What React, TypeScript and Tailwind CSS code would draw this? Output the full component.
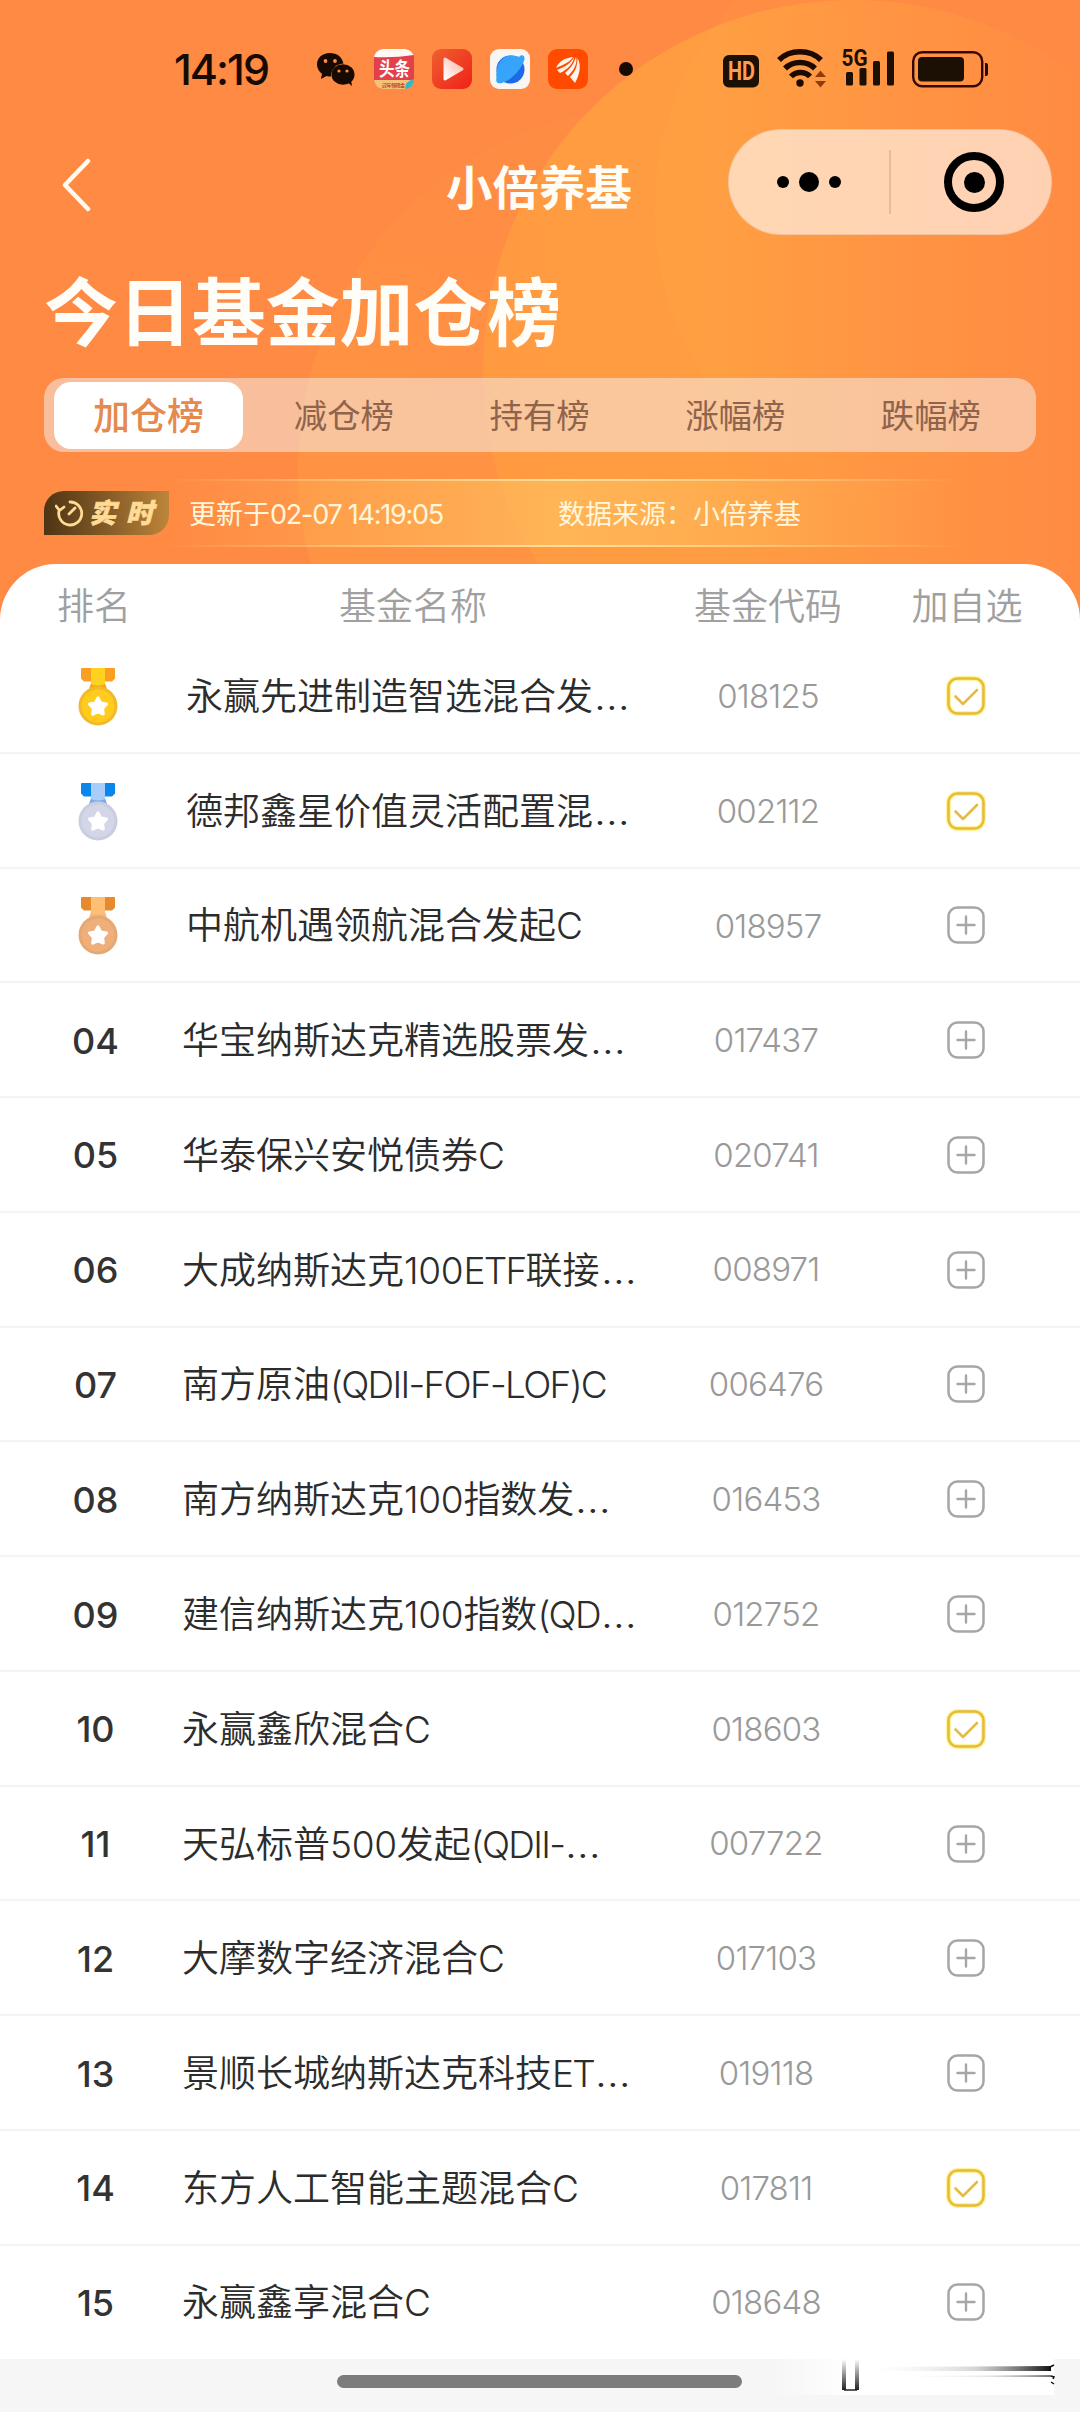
import React from 'react';

type Row = { name: string; code: string; added?: boolean };

const rows: Row[] = [
  { name: '永赢先进制造智选混合发…', code: '018125', added: true },
  { name: '德邦鑫星价值灵活配置混…', code: '002112', added: true },
  { name: '中航机遇领航混合发起C', code: '018957' },
  { name: '华宝纳斯达克精选股票发…', code: '017437' },
  { name: '华泰保兴安悦债券C', code: '020741' },
  { name: '大成纳斯达克100ETF联接…', code: '008971' },
  { name: '南方原油(QDII-FOF-LOF)C', code: '006476' },
  { name: '南方纳斯达克100指数发…', code: '016453' },
  { name: '建信纳斯达克100指数(QD…', code: '012752' },
  { name: '永赢鑫欣混合C', code: '018603', added: true },
  { name: '天弘标普500发起(QDII-…', code: '007722' },
  { name: '大摩数字经济混合C', code: '017103' },
  { name: '景顺长城纳斯达克科技ET…', code: '019118' },
  { name: '东方人工智能主题混合C', code: '017811', added: true },
  { name: '永赢鑫享混合C', code: '018648' },
];

const medals = [
  { side: '#fb9f22', mid: '#ffd21f', neck: '#f0a91c', rim: '#f3b92c', face: '#ffcb1c' },
  { side: '#0b86ea', mid: '#a9cdfb', neck: '#7fa9e6', rim: '#c9cedf', face: '#d3d6e6' },
  { side: '#e68a2c', mid: '#fcbf74', neck: '#f4b97c', rim: '#e6a873', face: '#eeaf7b' },
];

function Medal({ i }: { i: number }) {
  const m = medals[i];
  return (
    <svg width="40" height="58" viewBox="0 0 40 58">
      <path d="M3.500 0H13V13.500H6L3 10.500V1Z M36.500 0H27V13.500H34L37 10.500V1Z" fill={m.side} />
      <path d="M13 15H27L30 24H10Z" fill={m.neck} />
      <path d="M13 0H27V16Q20 19 13 16Z" fill={m.mid} />
      <circle cx="20" cy="38" r="19.5" fill={m.rim} />
      <circle cx="20" cy="38" r="16.500" fill={m.face} />
      <path
        d="M20 30L22.600 35L28.500 36L24.500 40.500L25.200 46L20 43.500L14.800 46L15.500 40.500L11.500 36L17.400 35Z"
        fill="#fff"
        stroke="#fff"
        strokeWidth="3.200"
        strokeLinejoin="round"
      />
    </svg>
  );
}

function Mark({ added }: { added?: boolean }) {
  return (
    <svg width="40" height="40" viewBox="0 0 40 40" fill="none" strokeLinecap="round" strokeLinejoin="round">
      {added && <rect x="2.500" y="2.500" width="35" height="35" rx="9" stroke="#fff3a0" strokeWidth="5" />}
      <rect x="2.500" y="2.500" width="35" height="35" rx="9" stroke={added ? '#e6bb35' : '#a6a6a6'} strokeWidth="2.500" />
      {added ? (
        <path d="M9.500 20.500L17 28L31 14" stroke="#e6bb45" strokeWidth="2.600" />
      ) : (
        <path d="M11.500 20H28.500M20 11.500V28.500" stroke="#a6a6a6" strokeWidth="2.400" />
      )}
    </svg>
  );
}

function FundName({ name }: { name: string }) {
  return (
    <>
      {(name.match(/[0-9]+|[A-Z()-]+|…|[^0-9A-Z()…-]+/g) ?? []).map((part, i) => {
        if (part === '…') return <span key={i} className="inline-block origin-left translate-x-[1px] scale-x-[1.14]">…</span>;
        if (/^[A-Z()-]/.test(part)) return <span key={i} className="tracking-[-1.700px]">{part}</span>;
        if (/^[0-9]/.test(part)) return <span key={i} className="tracking-[-.3px]">{part}</span>;
        return <span key={i}>{part}</span>;
      })}
    </>
  );
}

function WeChat() {
  return (
    <svg width="40" height="36" viewBox="0 0 40 36">
      <path d="M14 1C6 1 1 6 1 12.500C1 16.500 3 19.500 6 21.700L5 27L10.500 24C12 24.400 13 24.500 15 24.500C15 17 20 12 27.500 11.500C26 5 21 1 14 1Z" fill="#170a03" />
      <ellipse cx="27" cy="22.500" rx="11.500" ry="10.200" fill="#170a03" />
      <path d="M31 30L36 34L35 28Z" fill="#170a03" />
      <g fill="#ff8a43">
        <circle cx="9.500" cy="9" r="1.900" />
        <circle cx="19" cy="9" r="1.900" />
        <circle cx="23" cy="19" r="1.600" />
        <circle cx="31" cy="19" r="1.600" />
      </g>
    </svg>
  );
}

function StatusBar() {
  return (
    <div className="flex h-[129px] items-start pt-[49px]">
      <div className="ml-[174px] w-[142px] text-[43px] font-medium leading-[41px] tracking-[-2px] text-[#170a03] whitespace-nowrap">14:19</div>
      <div className="mt-[3px] w-[58px]">
        <WeChat />
      </div>
      <div className="flex gap-[18px]">
        <svg className="overflow-visible" width="40" height="40" viewBox="0 0 40 40">
          <clipPath id="tile"><rect width="40" height="40" rx="9" /></clipPath>
          <g clipPath="url(#tile)">
            <rect width="40" height="40" fill="#e2404a" />
            <path d="M0 0H40V6Q20 9 0 8Z" fill="#fffaf6" />
            <path d="M0 31H40V40H0Z" fill="#f6c27a" />
            <path d="M31 40Q31 32 40 30V40Z" fill="#35b6c8" />
          </g>
          <text x="5" y="27" fontSize="19" fontWeight="700" fill="#fff" textLength="31" lengthAdjust="spacingAndGlyphs">头条</text>
          <text x="8" y="37.500" fontSize="5" fontWeight="700" fill="#b5482a" textLength="23">过年领现金</text>
        </svg>
        <svg width="40" height="40" viewBox="0 0 40 40">
          <defs>
            <linearGradient id="play" x1="0" y1="0" x2="1" y2="1">
              <stop offset="0" stopColor="#f0602f" />
              <stop offset="1" stopColor="#ee2118" />
            </linearGradient>
            <linearGradient id="tri" x1="0" y1="1" x2="1" y2="0">
              <stop offset="0" stopColor="#fff" />
              <stop offset="1" stopColor="#ffb3a6" />
            </linearGradient>
          </defs>
          <rect width="40" height="40" rx="9" fill="url(#play)" />
          <path d="M13 10L30 20L13 30Z" fill="url(#tri)" stroke="url(#tri)" strokeWidth="3" strokeLinejoin="round" />
        </svg>
        <svg width="40" height="40" viewBox="0 0 40 40">
          <rect width="40" height="40" rx="9" fill="#f8f6f3" />
          <circle cx="20.500" cy="20.500" r="14" fill="#1d6ae8" />
          <path d="M29 8C31 5 35 6 34.500 10C33 18 22 31 13 33.500C9 35.500 5 34 6.500 29C5 20 10 7 21 6.500C25 6.500 27 7 29 8Z" fill="#37a4fb" />
        </svg>
        <svg width="40" height="40" viewBox="0 0 40 40">
          <rect width="40" height="40" rx="9" fill="#ff4a00" />
          <g fill="#fff4ea">
            <path d="M8 19C11 12 17 9 25 8C22 13 15 16 8 19Z" />
            <path d="M9 21C17 18 23 14 26 8C26 14 19 21 12 24Z" />
            <path d="M17 24C23 19 26 14 28 8C30 15 25 22 20 27Z" />
            <path d="M22 28C28 22 29.500 16 29.500 9C34 17 31 27 27 34Z" />
          </g>
        </svg>
      </div>
      <div className="ml-[31px] mt-[13px] h-[14px] w-[14px] rounded-full bg-[#170a03]" />
      <svg className="ml-[90px] mt-[6px]" width="36" height="33" viewBox="0 0 36 33">
        <rect width="36" height="32.500" rx="6" fill="#1c1004" />
        <text x="5" y="25" fontSize="25" fontWeight="700" fontFamily="Roboto" fill="#ff9d50" textLength="27" lengthAdjust="spacingAndGlyphs">HD</text>
      </svg>
      <svg className="ml-[18px]" width="50" height="40" viewBox="0 0 50 40" fill="none">
        <g stroke="#1c0a02" strokeWidth="5.500">
          <path d="M2 11C13 0 33 0 44 11" />
          <path d="M8 19.500C16 11.500 30 11.500 38 19.500" />
          <path d="M14 27.500C19 22 28 22 33 27.500" />
        </g>
        <circle cx="23" cy="34" r="3.700" fill="#1c0a02" />
        <path d="M38 28L43.500 21.500L49 28ZM38 32L43.500 38.500L49 32Z" fill="#8d3d0c" />
      </svg>
      <svg className="ml-[15px] overflow-visible" width="54" height="40" viewBox="0 0 54 40">
        <g fill="#1c1004">
          <rect x="4" y="23" width="7" height="13.500" rx="1.500" />
          <rect x="17.500" y="19" width="7" height="17.500" rx="1.500" />
          <rect x="31" y="12" width="7" height="24.500" rx="1.500" />
          <rect x="45" y="2.500" width="7" height="34" rx="1.500" />
        </g>
        <text x="-0.500" y="16.500" fontSize="23" fontWeight="700" fontFamily="Roboto" textLength="26" lengthAdjust="spacingAndGlyphs" fill="#1c1004">5G</text>
      </svg>
      <svg className="ml-[16px] mt-[2px]" width="78" height="38" viewBox="0 0 78 38">
        <rect x="1.200" y="1.200" width="69" height="34" rx="9" fill="none" stroke="#330a02" strokeWidth="2.400" />
        <rect x="6" y="6" width="46" height="24.500" rx="4" fill="#1c1004" />
        <path d="M73 12H74Q76 12 76 14V23Q76 25 74 25H73Z" fill="#1c1004" />
      </svg>
    </div>
  );
}

function Backdrop() {
  return (
    <svg className="absolute inset-0 -z-10" width="1080" height="640" viewBox="0 0 1080 640">
      <defs>
        <linearGradient id="disc" gradientUnits="userSpaceOnUse" x1="480" y1="0" x2="1080" y2="0">
          <stop offset="0" stopColor="#ff9a41" />
          <stop offset="0.400" stopColor="#ff9d42" />
          <stop offset="1" stopColor="#ff8b43" />
        </linearGradient>
        <linearGradient id="outer" gradientUnits="userSpaceOnUse" x1="420" y1="180" x2="380" y2="420">
          <stop offset="0" stopColor="#ff8c43" />
          <stop offset="1" stopColor="#ff9343" />
        </linearGradient>
        <linearGradient id="glow" gradientUnits="userSpaceOnUse" x1="650" y1="0" x2="1000" y2="0">
          <stop offset="0" stopColor="#ffab45" stopOpacity=".2" />
          <stop offset="1" stopColor="#ff9444" stopOpacity="0" />
        </linearGradient>
      </defs>
      <rect width="1080" height="640" fill="#ff8a43" />
      <circle cx="660" cy="468" r="362" fill="url(#outer)" />
      <circle cx="853" cy="370" r="370" fill="url(#disc)" />
      <circle cx="965" cy="210" r="310" fill="url(#glow)" />
    </svg>
  );
}

export default function App() {
  return (
    <div className="relative isolate flex h-[2412px] w-[1080px] flex-col overflow-hidden bg-[#f6f6f6] [font-family:Inter,'Noto_Sans_CJK_SC',sans-serif]">
      <Backdrop />
      <StatusBar />

      <div className="flex h-[106px] items-center">
        <svg className="ml-[60px] mt-[6px]" width="32" height="54" viewBox="0 0 32 54" fill="none">
          <path d="M28 3L5 27L28 51" stroke="#fffaf0" strokeWidth="4.500" strokeLinecap="round" strokeLinejoin="round" />
        </svg>
        <h1 className="ml-[354px] w-[282px] pt-[11px] text-[46.500px] font-bold leading-[50px] text-[#fffdf6] whitespace-nowrap">小倍养基</h1>
        <div className="flex h-[106px] w-[324px] items-center rounded-full border border-[#e8b48c]/50 bg-white/60">
          <div className="flex w-[160px] items-center justify-center gap-[10px]">
            <span className="h-[12px] w-[12px] rounded-full bg-black" />
            <span className="h-[20px] w-[20px] rounded-full bg-black" />
            <span className="h-[12px] w-[12px] rounded-full bg-black" />
          </div>
          <div className="h-[64px] w-[2px] bg-[#e3bd9c]" />
          <div className="flex flex-1 justify-center">
            <div className="mr-[-6px] flex h-[60px] w-[60px] items-center justify-center rounded-full border-[8px] border-black">
              <span className="h-[21px] w-[21px] rounded-full bg-black" />
            </div>
          </div>
        </div>
      </div>

      <h2 className="ml-[44px] mt-[34px] h-[109px] text-[73.900px] font-bold leading-[88px] text-[#fffdf8] whitespace-nowrap">今日基金加仓榜</h2>

      <div className="mx-[44px] flex h-[74px] items-center rounded-[20px] bg-[#f4ebe6]/55 pl-[10px] text-[#8f634c]">
        <div className="flex h-[67px] w-[189px] items-center justify-center rounded-[17px] bg-white pt-[3px] text-[37px] font-medium text-[#e58a4e]">加仓榜</div>
        <div className="flex flex-1 pl-[3px] pt-[2px]">
          {['减仓榜', '持有榜', '涨幅榜', '跌幅榜'].map((t) => (
            <div key={t} className="w-[195.700px] text-center text-[33.400px] leading-[48px]">{t}</div>
          ))}
        </div>
      </div>

      <div className="mt-[27px] flex h-[68px] items-center">
        <div className="z-10 ml-[44px] flex h-[44px] w-[125px] items-center rounded-br-[20px] rounded-tl-[20px] bg-linear-to-r from-[#4f3414] to-[#bd853a] pl-[11px] text-[#ffdb96]">
          <svg width="30" height="30" viewBox="0 0 30 30" fill="none" stroke="#ffdb96" strokeWidth="2.800" strokeLinecap="round">
            <path d="M15 4A11.500 11.500 0 1 1 4 13M1 8L4.500 12.500L9 9M14 16L20 10" />
          </svg>
          <span className="ml-[4px] text-[27px] font-black italic leading-none tracking-[10px] whitespace-nowrap [-webkit-text-stroke:.6px_#ffdb96]">实时</span>
        </div>
        <div className="ml-[-4px] h-[68px] w-[800px] bg-linear-to-r from-transparent via-[#ffc060]/70 to-transparent">
          <div className="h-[2px] bg-linear-to-r from-transparent via-[#ffe09c] to-transparent" />
          <div className="flex h-[64px] items-center pl-[24px] pt-[3px] text-[27px] leading-[64px] text-[#fff6dc] whitespace-nowrap">
            <div className="w-[369px]">
              更新于<span className="tracking-[-1.250px]">02-07 14:19:05</span>
            </div>
            <span>数据来源：小倍养基</span>
          </div>
          <div className="h-[2px] bg-linear-to-r from-transparent via-[#ffe09c] to-transparent" />
        </div>
      </div>

      <div className="mt-[17px] flex h-[1795px] flex-col rounded-t-[56px] bg-white">
        <div className="grid h-[75px] grid-cols-[186px_454px_256px_184px] items-center pt-[10px] text-[37px] font-[350] leading-none text-[#a0a0a0]">
          <div className="pl-[57px]">排名</div>
          <div className="text-center">基金名称</div>
          <div className="text-center">基金代码</div>
          <div className="pr-[42px] text-center whitespace-nowrap">加自选</div>
        </div>
        {rows.map((r, i) => (
          <div
            key={r.code}
            className="flex h-[114.770px] shrink-0 items-center border-b-2 border-[#f4f4f4] last:h-[112px] last:border-0"
          >
            <div className={i < 3 ? 'w-[186px] pl-[78px] pt-[3px]' : 'w-[182px] pl-[9px] pt-[2px] text-center text-[36px] font-medium text-[#333]'}>
              {i < 3 ? <Medal i={i} /> : String(i + 1).padStart(2, '0')}
            </div>
            <div className={i < 3 ? 'w-[501px] pt-[3px] text-[37px] font-[350] leading-[50px] text-[#2c2c2c] whitespace-nowrap' : 'w-[505px] pt-[3px] text-[37px] font-[350] leading-[50px] text-[#2c2c2c] whitespace-nowrap'}>
              <FundName name={r.name} />
            </div>
            <div className={i < 3 ? 'w-[162px] pt-[3px] text-center text-[33px] font-[350] tracking-[-.8px] text-[#999]' : 'w-[158px] pt-[2px] text-center text-[33px] font-[350] tracking-[-.8px] text-[#999]'}>{r.code}</div>
            <div className={i < 3 ? 'ml-[97px] pt-[1px]' : 'ml-[101px] pt-[1px]'}>
              <Mark added={r.added} />
            </div>
          </div>
        ))}
      </div>

      <div className="relative flex h-[53px] bg-[#f6f6f6] pl-[337px] pt-[16px]">
        <div className="h-[13px] w-[405px] rounded-full bg-[#7c7c7c]" />
        <svg className="absolute left-[770px] top-0" width="290" height="42" viewBox="0 0 290 42">
          <defs>
            <linearGradient id="fadeY" x1="0" y1="0" x2="0" y2="1">
              <stop offset="0" stopColor="#fff" />
              <stop offset="1" stopColor="#222" />
            </linearGradient>
            <linearGradient id="fadeX" x1="0" y1="0" x2="1" y2="0">
              <stop offset="0" stopColor="#fff" stopOpacity="0" />
              <stop offset="0.600" stopColor="#777" stopOpacity=".3" />
              <stop offset="1" stopColor="#111" />
            </linearGradient>
            <linearGradient id="pale" x1="0" y1="0" x2="1" y2="0">
              <stop offset="0" stopColor="#fff" stopOpacity="0" />
              <stop offset="0.300" stopColor="#fff" />
            </linearGradient>
          </defs>
          <rect width="284" height="36" fill="url(#pale)" />
          <path d="M72 0H76V31H72ZM85 0H89V31H85Z" fill="url(#fadeY)" />
          <path d="M74 31H87" stroke="#222" strokeWidth="1.500" />
          <path d="M90 8L281 7V12L90 12Z" fill="url(#fadeX)" />
          <path d="M120 17L281 16V18L120 18Z" fill="url(#fadeX)" opacity=".6" />
          <path d="M284 6L280 8V12M281 17L284 18L283 20M281 23L284 25" stroke="#111" strokeWidth="1.500" fill="none" />
        </svg>
      </div>
    </div>
  );
}
